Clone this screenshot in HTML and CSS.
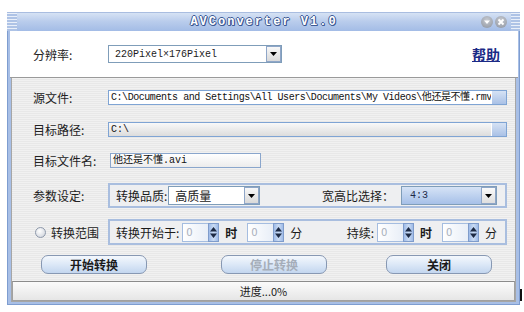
FILE: index.html
```html
<!DOCTYPE html>
<html lang="zh-CN">
<head>
<meta charset="utf-8">
<title>AVConverter V1.0</title>
<link rel="stylesheet" href="styles.css">
</head>
<body>
<div class="window">
  <div class="titlebar">
    <div class="grip"></div>
    <div class="title">AVConverter V1.0</div>
    <div class="tbtns">
      <span class="tbtn"><svg width="12" height="12" viewBox="0 0 12 12"><path d="M3 4.5 L9 4.5 L6 8 Z" fill="#fff"/></svg></span>
      <span class="tbtn"><svg width="12" height="12" viewBox="0 0 12 12"><path d="M3.5 3.5 L8.5 8.5 M8.5 3.5 L3.5 8.5" stroke="#fff" stroke-width="1.8"/></svg></span>
    </div>
    <div class="grip grip-r"></div>
  </div>
  <div class="frame">
    <div class="top">
      <span class="label">分辨率:</span>
      <div class="combo combo-res">
        <span class="combo-text mono">220Pixel×176Pixel</span>
        <span class="combo-btn"><svg width="7" height="4" viewBox="0 0 7 4"><path d="M0 0 H7 L3.5 4 Z" fill="#000"/></svg></span>
      </div>
      <a class="help" href="#">帮助</a>
    </div>
    <div class="main">
      <div class="row r1">
        <span class="label">源文件:</span>
        <div class="field field-wide">
          <span class="field-text mono path">C:\Documents and Settings\All Users\Documents\My Videos\他还是不懂.rmvb</span>
          <span class="browse"></span>
        </div>
      </div>
      <div class="row r2">
        <span class="label">目标路径:</span>
        <div class="field field-wide field-gray">
          <span class="field-text mono">C:\</span>
          <span class="browse"></span>
        </div>
      </div>
      <div class="row r3">
        <span class="label">目标文件名:</span>
        <div class="field field-name">
          <span class="field-text mono">他还是不懂.avi</span>
        </div>
      </div>
      <div class="row r4">
        <span class="label">参数设定:</span>
        <div class="group">
          <div class="gpart">
            <span>转换品质:</span>
            <div class="combo combo-q">
              <span class="combo-text">高质量</span>
              <span class="combo-btn"><svg width="7" height="4" viewBox="0 0 7 4"><path d="M0 0 H7 L3.5 4 Z" fill="#000"/></svg></span>
            </div>
          </div>
          <div class="gpart">
            <span>宽高比选择：</span>
            <div class="combo combo-ar">
              <span class="combo-text mono">4:3</span>
              <span class="combo-btn"><svg width="7" height="4" viewBox="0 0 7 4"><path d="M0 0 H7 L3.5 4 Z" fill="#000"/></svg></span>
            </div>
          </div>
        </div>
      </div>
      <div class="row r5">
        <span class="label radio-label"><span class="radio"></span>转换范围</span>
        <div class="group group2">
          <div class="gpart">
            <span>转换开始于:</span>
            <span class="spin s1"><span class="spin-text">0</span><span class="spin-btn"><svg width="9" height="15" viewBox="0 0 9 15"><path d="M1 6.5 L4.5 2 L8 6.5 Z M1 8.5 L8 8.5 L4.5 13 Z" fill="#1d2a44"/></svg></span></span>
            <span class="unit">时</span>
            <span class="spin"><span class="spin-text">0</span><span class="spin-btn"><svg width="9" height="15" viewBox="0 0 9 15"><path d="M1 6.5 L4.5 2 L8 6.5 Z M1 8.5 L8 8.5 L4.5 13 Z" fill="#1d2a44"/></svg></span></span>
            <span class="unit">分</span>
          </div>
          <div class="gpart">
            <span>持续:</span>
            <span class="spin s1"><span class="spin-text">0</span><span class="spin-btn"><svg width="9" height="15" viewBox="0 0 9 15"><path d="M1 6.5 L4.5 2 L8 6.5 Z M1 8.5 L8 8.5 L4.5 13 Z" fill="#1d2a44"/></svg></span></span>
            <span class="unit">时</span>
            <span class="spin"><span class="spin-text">0</span><span class="spin-btn"><svg width="9" height="15" viewBox="0 0 9 15"><path d="M1 6.5 L4.5 2 L8 6.5 Z M1 8.5 L8 8.5 L4.5 13 Z" fill="#1d2a44"/></svg></span></span>
            <span class="unit">分</span>
          </div>
        </div>
      </div>
      <div class="row r6 buttons">
        <button class="btn b-start">开始转换</button>
        <button class="btn b-stop" disabled>停止转换</button>
        <button class="btn b-close">关闭</button>
      </div>
      <div class="status">进度...0%</div>
    </div>
  </div>
</div>
<div class="cursor"></div>
</body>
</html>
```
FILE: styles.css
```css
* { box-sizing: border-box; }
html, body { margin: 0; background: #fff; }
body {
  font-family: "Noto Sans CJK SC", "DejaVu Sans", sans-serif;
  font-size: 12px;
  color: #1b1b1b;
  position: relative;
  width: 524px;
  height: 312px;
  overflow: hidden;
}
.mono { font-family: "Liberation Mono", "Noto Sans CJK SC", monospace; font-size: 10px; }
.path { letter-spacing: -0.45px; }

.window {
  margin: 12px 0 0 7px;
  width: 513px;
  height: 292px;
  display: flex;
  flex-direction: column;
}
.titlebar {
  height: 19px;
  display: flex;
  align-items: center;
  background: linear-gradient(#d6e2f4 0%, #bacdec 45%, #a3bce6 100%);
  border-top: 1px solid #a9bde0;
}
.grip {
  width: 10px;
  height: 100%;
  background: repeating-linear-gradient(#e9eff9 0 1px, #aec3e6 1px 3px);
}
.grip-r { width: 9px; }
.title {
  flex: 1;
  text-align: center;
  padding-left: 30px;
  font-family: "Liberation Mono", monospace;
  font-weight: bold;
  font-size: 12px;
  letter-spacing: 2px;
  color: #fff;
  text-shadow: 1px 0 0 #3d5a94, -1px 0 0 #3d5a94, 0 1px 0 #3d5a94, 0 -1px 0 #3d5a94, 1px 1px 0 #3d5a94;
  line-height: 18px;
}
.tbtns { display: flex; gap: 2px; padding-right: 4px; }
.tbtn {
  width: 12px;
  height: 12px;
  border-radius: 50%;
  background: radial-gradient(circle at 50% 35%, #c7cbd2, #8d939e);
  display: flex;
}

.frame {
  flex: 1;
  background: #a8bfe6;
  border-left: 1px solid #7e9dd0;
  border-right: 1px solid #7e9dd0;
  border-bottom: 1px solid #7e9dd0;
  padding: 0 1px 2px 2px;
  display: flex;
  flex-direction: column;
}
.top {
  height: 47px;
  background: #fff;
  display: flex;
  align-items: center;
  padding-left: 23px;
  padding-right: 18px;
  border-bottom: 1px solid #9a9a9a;
}
.top .label { width: 75px; }
.help {
  margin-left: auto;
  font-size: 14px;
  font-weight: bold;
  color: #1b2a86;
  text-decoration: underline;
}

.main {
  flex: 1;
  margin: 0 2px 0 1px;
  border: 1px solid #a6a6a6;
  border-top: 0;
  background: repeating-linear-gradient(#f1f1f1 0 1px, #e8e8e8 1px 2px);
  padding: 12px 0 0 21px;
  display: flex;
  flex-direction: column;
}
.label { width: 75px; flex: none; color: #222; }
.row { display: flex; align-items: center; height: 15px; }
.r2 { margin-top: 17px; }
.r3 { margin-top: 16px; }
.r4 { margin-top: 15px; height: 25px; }
.r5 { margin-top: 11px; height: 26px; }
.r6 { margin-top: 10px; height: 19px; }

.field {
  height: 15px;
  border: 1px solid #7fa4d4;
  background: #fff;
  display: flex;
  align-items: center;
  overflow: hidden;
}
.field-wide { width: 399px; }
.field-gray { background: linear-gradient(#f9f9f9, #dcdcdc); }
.field-name { width: 151px; margin-left: 2px; border-color: #8aa6cc; background: linear-gradient(#fff, #ececec); }
.field-text { flex: 1; padding-left: 2px; white-space: nowrap; overflow: hidden; line-height: 13px; color: #111; }
.browse {
  width: 15px;
  height: 13px;
  flex: none;
  background: linear-gradient(#d6e2f4, #a9c1e6);
  border-left: 1px solid #fff;
}

.combo {
  display: flex;
  border: 1px solid #7f9db9;
  background: #fff;
  align-items: stretch;
}
.combo-text { flex: 1; padding-left: 6px; display: flex; align-items: center; white-space: nowrap; }
.combo-btn {
  width: 15px;
  flex: none;
  display: flex;
  align-items: center;
  justify-content: center;
  background: linear-gradient(#f8f8f8, #d9d9d9);
  border: 1px solid #8fa6c8;
}
.combo-res { width: 174px; height: 18px; }
.combo-q { width: 92px; height: 19px; margin-left: 1px; }
.combo-ar { width: 96px; height: 19px; margin-left: 7px; background: linear-gradient(#d6e3f6, #a6c0e8); }
.combo-ar .combo-text { padding-left: 8px; color: #1c2a4a; }
.combo-ar .combo-btn { background: linear-gradient(#fafafa, #dedede); }

.group {
  width: 399px;
  height: 100%;
  border: 2px solid #a9bedf;
  background: #eeeff1;
  display: flex;
  align-items: center;
  justify-content: space-between;
  padding: 0 8px 0 6px;
}
.gpart { display: flex; align-items: center; }
.radio-label { display: flex; align-items: center; gap: 5px; padding-left: 2px; }
.radio {
  width: 11px;
  height: 11px;
  border-radius: 50%;
  border: 1px solid #8e99ab;
  background: radial-gradient(circle at 40% 35%, #ffffff, #c9ced7);
}
.spin { display: flex; height: 19px; margin-left: 3px; }
.spin-text {
  width: 26px;
  border: 1px solid #a5bde0;
  border-right: 0;
  background: linear-gradient(90deg, #ffffff, #e8eef7);
  color: #a9b0bb;
  font-family: "DejaVu Sans", sans-serif;
  font-size: 10px;
  padding-left: 3px;
  display: flex;
  align-items: center;
}
.spin-btn {
  width: 11px;
  display: flex;
  align-items: center;
  justify-content: center;
  background: linear-gradient(90deg, #9fbbe8, #cbdcf3, #9fbbe8);
  border: 1px solid #7f9ccb;
}
.unit { margin: 0 7px 0 6px; font-weight: bold; }
.gpart .unit:last-child { margin-right: 0; font-weight: normal; }

.buttons { padding-left: 8px; }
.btn {
  width: 106px;
  height: 19px;
  border: 1px solid #8798b3;
  border-radius: 7px;
  background: linear-gradient(#f4f8fd 0%, #dce8f7 50%, #c3d6ef 100%);
  font-family: "Noto Sans CJK SC", sans-serif;
  font-weight: bold;
  font-size: 12px;
  color: #1b1b1b;
  padding: 0;
  line-height: 17px;
}
.b-stop { margin-left: 74px; color: #a5adb9; }
.b-close { margin-left: 59px; }

.status {
  margin: 7px 0 0 -21px;
  height: 20px;
  border: 1px solid #a0a0a0;
  border-top-color: #8c8c8c;
  background: linear-gradient(#fbfbfb, #e6e6e6);
  text-align: center;
  line-height: 18px;
  font-size: 11px;
}
.cursor {
  position: absolute;
  left: 520px;
  top: 289px;
  width: 2px;
  height: 12px;
  background: #111;
}
```
